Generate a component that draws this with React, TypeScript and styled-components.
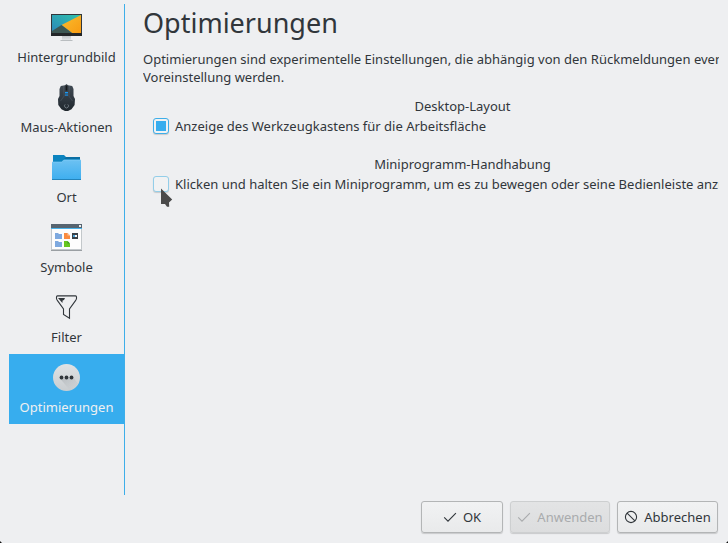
import React from "react";
import styled, { createGlobalStyle } from "styled-components";

const GlobalStyle = createGlobalStyle`
  * { box-sizing: border-box; }
  html, body { margin: 0; padding: 0; background: #eeeff1; }
  body { overflow: hidden; }
`;

const Dialog = styled.div`
  position: relative;
  width: 728px;
  height: 543px;
  display: flex;
  flex-direction: column;
  background: #eeeff1;
  color: #31363b;
  font-family: "Noto Sans", sans-serif;
  font-size: 13px;
  line-height: 18px;
  cursor: default;
  overflow: hidden;
`;

const Main = styled.div`
  display: flex;
  height: 495px;
  padding-top: 4px;
`;

const Sidebar = styled.nav`
  flex: none;
  width: 125px;
  padding-left: 9px;
  border-right: 1px solid #3daee9;
`;

const Category = styled.div<{ $active?: boolean }>`
  display: flex;
  flex-direction: column;
  align-items: center;
  height: 70px;
  padding-top: 7px;
  background: ${(p) => (p.$active ? "#37adee" : "transparent")};
  color: ${(p) => (p.$active ? "#eff0f1" : "inherit")};
  svg { display: block; flex: none; }
`;

const CategoryLabel = styled.span`
  margin-top: 5px;
  white-space: nowrap;
`;

const Content = styled.main`
  flex: none;
  width: 576px;
  margin-left: 18px;
  overflow: hidden;
  white-space: nowrap;
`;

const Title = styled.h1`
  margin: 0;
  height: 46px;
  font-size: 27px;
  font-weight: 400;
  line-height: 37px;
`;

const Line = styled.div<{ $spacing?: number }>`
  letter-spacing: ${(p) => p.$spacing ?? 0}px;
`;

const Section = styled.section<{ $gap: number }>`
  margin-top: ${(p) => p.$gap}px;
`;

const SectionTitle = styled.div`
  width: 639px;
  text-align: center;
`;

const Option = styled.label`
  display: flex;
  align-items: center;
  height: 22px;
  padding-left: 10px;
  gap: 6px;
`;

const CheckBox = styled.span<{ $checked?: boolean }>`
  display: flex;
  flex: none;
  align-items: center;
  justify-content: center;
  width: 16px;
  height: 16px;
  border: 1px solid ${(p) => (p.$checked ? "#3daee9" : "#93cee9")};
  border-radius: 3px;
  box-shadow: 0 1px 1px rgba(0, 0, 0, 0.16);
  background: #f1f2f3;
  &::after {
    content: "";
    width: 10px;
    height: 10px;
    background: ${(p) => (p.$checked ? "#37adee" : "transparent")};
  }
`;

const Footer = styled.footer`
  display: flex;
  justify-content: flex-end;
  gap: 7px;
  padding: 6px 10px 0 0;
`;

const Button = styled.button<{ $width: number }>`
  display: flex;
  align-items: center;
  justify-content: center;
  gap: 6px;
  width: ${(p) => p.$width}px;
  height: 32px;
  padding: 0 0 1px;
  border: 1px solid #b3b5b6;
  border-radius: 3px;
  background: linear-gradient(#f1f2f3, #e9eaeb);
  box-shadow: 0 1px 1px rgba(0, 0, 0, 0.16);
  color: #31363b;
  font: inherit;
  white-space: nowrap;
  &:disabled {
    border-color: #cdcfd0;
    background: linear-gradient(#e3e4e5, #dcddde);
    color: #a9abad;
  }
`;

const Pointer = styled.svg`
  position: absolute;
  left: 160px;
  top: 188px;
`;

const Corner = styled.i<{ $right?: boolean }>`
  position: absolute;
  bottom: -1px;
  ${(p) => (p.$right ? "right: -1px;" : "left: -1px;")}
  width: 3px;
  height: 3px;
  background: radial-gradient(
    circle at ${(p) => (p.$right ? "0 0" : "100% 0")},
    transparent 1.2px,
    #111 2px
  );
`;

const iconSize = { width: 33, height: 32, viewBox: "0 0 33 32" };

const MonitorIcon = () => (
  <svg {...iconSize}>
    <defs>
      <linearGradient id="teal" x1="0" y1="1" x2="1" y2="0">
        <stop offset="0" stopColor="#2b86bb" />
        <stop offset="1" stopColor="#2fc3ac" />
      </linearGradient>
      <linearGradient id="orange" x1="0" y1="0" x2="1" y2="1">
        <stop offset="0" stopColor="#f9bd2f" />
        <stop offset="1" stopColor="#f89b12" />
      </linearGradient>
      <linearGradient id="stand" x1="0" y1="0" x2="0" y2="1">
        <stop offset="0" stopColor="#c3c7ca" />
        <stop offset="1" stopColor="#e2e5e7" />
      </linearGradient>
    </defs>
    <rect x="1" y="3" width="31" height="22" fill="#31363b" />
    <rect x="2" y="4" width="29" height="18" fill="url(#teal)" />
    <path d="M31 4 L11.5 14 L22 22 H31Z" fill="url(#orange)" />
    <path d="M2 20 L11.5 14 L22 22 H2Z" fill="#3d5754" />
    <rect x="1" y="22" width="31" height="3" fill="#232629" />
    <path d="M12 25 H21 V29 H12Z" fill="url(#stand)" />
    <rect x="10.5" y="29" width="12" height="1" fill="#b9bdc0" />
  </svg>
);

const MouseIcon = () => (
  <svg {...iconSize}>
    <defs>
      <linearGradient id="mouse" x1="0" y1="0" x2="0" y2="1">
        <stop offset="0" stopColor="#424c56" />
        <stop offset="1" stopColor="#20272e" />
      </linearGradient>
    </defs>
    <path
      d="M16.5 3 L18 4.3 L22.2 5 L23.5 8 V15 L25 18 L24.6 24 L21.5 28.2 L18 30 H15 L11.5 28.2 L8.3 24 L8 18 L9.5 15 V8 L10.8 5 L15 4.3Z"
      fill="url(#mouse)"
    />
    <path d="M13.4 5 L14.2 15 L10.5 20 M19.6 5 L18.8 15 L22.5 20" fill="none" stroke="#56616b" strokeWidth=".5" />
    <rect x="15.6" y="4.5" width="1.8" height="5" fill="#14181b" />
    <rect x="15" y="11" width="3" height="1.4" fill="#1d99f3" />
    <rect x="15" y="13.4" width="3" height="1.4" fill="#1d83cf" />
    <path d="M15.2 23.4 A2 2 0 1 0 17.8 23.4" fill="none" stroke="#7d8891" strokeWidth=".8" />
  </svg>
);

const FolderIcon = () => (
  <svg {...iconSize}>
    <defs>
      <linearGradient id="folder" x1="0" y1="0" x2="0" y2="1">
        <stop offset="0" stopColor="#6cc1f2" />
        <stop offset="1" stopColor="#3daeef" />
      </linearGradient>
    </defs>
    <path d="M3 4 H14 L16 6 H30 V12 H3Z" fill="#0b83bf" />
    <path d="M16 6 H30 V8 H14Z" fill="#0a6ea3" />
    <path d="M2 11 H11.5 L14 9 H31 V29 H2Z" fill="url(#folder)" />
    <path d="M2 11 H11.5 L14 9 H31" fill="none" stroke="#8cd1f8" strokeWidth=".6" />
    <rect x="2" y="28" width="29" height="1" fill="#2484bb" />
  </svg>
);

const IconsIcon = () => (
  <svg {...iconSize}>
    <rect x="1" y="3" width="31" height="27" fill="#c3c8cb" />
    <rect x="2" y="8" width="29" height="20" fill="#fdfdfd" />
    <rect x="1" y="3" width="31" height="4" fill="#566470" />
    <rect x="29" y="4" width="2" height="2" fill="#eceeef" />
    <rect x="1" y="7" width="31" height="1" fill="#4ab3ea" />
    <rect x="1" y="29" width="31" height="1" fill="#9a9fa3" />
    <path d="M5 12 H8 L9 13 H12 V18 H5Z M5 20 H8 L9 21 H12 V26 H5Z" fill="#7ea9df" />
    <path d="M14 12 H17.5 L20 14.5 V18 H14Z" fill="#fa8b3f" />
    <path d="M14 20 H17.5 L20 22.5 V26 H14Z" fill="#67c61f" />
    <path d="M17.5 12 V14.5 H20Z" fill="#fdc29c" />
    <path d="M17.5 20 V22.5 H20Z" fill="#35952a" />
    <rect x="22" y="12" width="6" height="6" fill="#3a4148" />
    <rect x="23" y="14" width="4" height="2" fill="#4aa5dc" />
    <rect x="25" y="14" width="2" height="2" fill="#f4f6f7" />
  </svg>
);

const FilterIcon = () => (
  <svg {...iconSize}>
    <path
      d="M7.5 4.9 H25.5 Q26.5 5 26.5 6 V7.5 Q26.3 8.6 25.5 9.6 L19.5 18 V27.3 L13.5 23.4 V18 L7.5 9.6 Q6.7 8.6 6.5 7.5 V6 Q6.5 5 7.5 4.9Z"
      fill="none"
      stroke="#31363b"
      strokeWidth="1.1"
    />
    <path d="M8 7 H15 L14 9 L12.6 9.4 L12.4 12Z" fill="#31363b" />
  </svg>
);

const DotsIcon = () => (
  <svg {...iconSize}>
    <defs>
      <linearGradient id="disc" x1="0" y1="0" x2="0" y2="1">
        <stop offset="0" stopColor="#dfe2e4" />
        <stop offset="1" stopColor="#c9cdd0" />
      </linearGradient>
      <linearGradient id="shade" x1="0" y1="0" x2="0.6" y2="1">
        <stop offset="0" stopColor="#a9aeb2" stopOpacity=".7" />
        <stop offset="1" stopColor="#b5babe" stopOpacity="0" />
      </linearGradient>
    </defs>
    <circle cx="16.5" cy="16.5" r="13.5" fill="url(#disc)" />
    <path d="M10.5 18 L20 29.4 L28 23 L23 16Z" fill="url(#shade)" />
    <circle cx="11.5" cy="16.5" r="1.9" fill="#31363b" />
    <circle cx="16.5" cy="16.5" r="1.9" fill="#31363b" />
    <circle cx="21.5" cy="16.5" r="1.9" fill="#31363b" />
  </svg>
);

const CheckIcon = () => (
  <svg width="14" height="14" viewBox="0 0 14 14" fill="none" stroke="currentColor" strokeWidth="1.1">
    <path d="M1.2 7.4 L5 11.2 L12.9 3.1" />
  </svg>
);

const CancelIcon = () => (
  <svg width="14" height="14" viewBox="0 0 14 14" fill="none" stroke="currentColor" strokeWidth="1.1">
    <circle cx="7" cy="7" r="5.6" />
    <path d="M3.1 3.1 L10.9 10.9" />
  </svg>
);

const categories = [
  { label: "Hintergrundbild", Icon: MonitorIcon },
  { label: "Maus-Aktionen", Icon: MouseIcon },
  { label: "Ort", Icon: FolderIcon },
  { label: "Symbole", Icon: IconsIcon },
  { label: "Filter", Icon: FilterIcon },
  { label: "Optimierungen", Icon: DotsIcon, active: true },
];

export default function App() {
  return (
    <>
      <GlobalStyle />
      <Dialog>
        <Main>
          <Sidebar>
            {categories.map(({ label, Icon, active }) => (
              <Category key={label} $active={active}>
                <Icon />
                <CategoryLabel>{label}</CategoryLabel>
              </Category>
            ))}
          </Sidebar>
          <Content>
            <Title>Optimierungen</Title>
            <Line $spacing={0.01}>
              Optimierungen sind experimentelle Einstellungen, die abhängig von den Rückmeldungen eventuell
            </Line>
            <Line>Voreinstellung werden.</Line>
            <Section $gap={11}>
              <SectionTitle>Desktop-Layout</SectionTitle>
              <Option>
                <CheckBox $checked />
                <Line>Anzeige des Werkzeugkastens für die Arbeitsfläche</Line>
              </Option>
            </Section>
            <Section $gap={18}>
              <SectionTitle>Miniprogramm-Handhabung</SectionTitle>
              <Option>
                <CheckBox />
                <Line>Klicken und halten Sie ein Miniprogramm, um es zu bewegen oder seine Bedienleiste anzuzeigen</Line>
              </Option>
            </Section>
          </Content>
        </Main>
        <Footer>
          <Button $width={82}><CheckIcon />OK</Button>
          <Button $width={100} disabled><CheckIcon />Anwenden</Button>
          <Button $width={101}><CancelIcon />Abbrechen</Button>
        </Footer>
        <Pointer width="13" height="20" viewBox="0 0 13 20">
          <path d="M1 0.6 L12.2 11.6 L9 14.5 L9.2 18.8 L7 18.8 L5 16 L1 16Z" fill="#4a4a4a" />
        </Pointer>
        <Corner />
        <Corner $right />
      </Dialog>
    </>
  );
}
